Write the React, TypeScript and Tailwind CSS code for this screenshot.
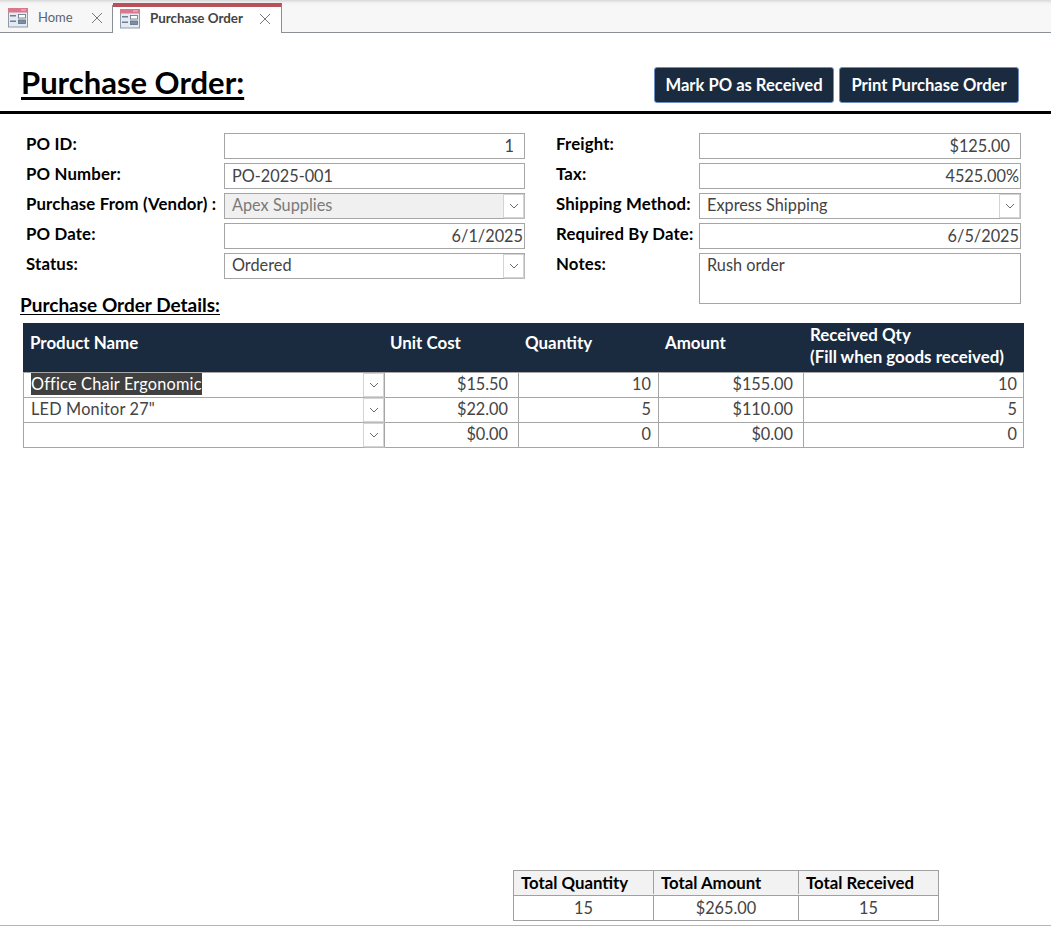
import type { ReactNode } from 'react';

const font = "font-['Lato',sans-serif]";

function FormIcon() {
  return (
    <svg width="20" height="20" viewBox="0 0 20 20" className="shrink-0">
      <rect x="0.5" y="0.5" width="19" height="18.5" fill="#e4eaf1" stroke="#8e9bab" />
      <rect x="0" y="0" width="20" height="4.5" fill="#d9788c" />
      <rect x="13" y="1.5" width="5" height="1" fill="#f2c4cf" />
      <rect x="2" y="7" width="6" height="1.5" fill="#6f7e90" />
      <rect x="2" y="12.5" width="6" height="1.5" fill="#6f7e90" />
      <rect x="10.5" y="6.5" width="7" height="3.5" fill="#fff" stroke="#5f6f82" strokeWidth="0.8" />
      <rect x="10.5" y="12" width="7" height="3.5" fill="#7e8ea1" stroke="#5f6f82" strokeWidth="0.8" />
    </svg>
  );
}

function CloseIcon() {
  return (
    <svg width="12" height="12" viewBox="0 0 12 12" className="shrink-0">
      <path d="M1 1 L11 11 M11 1 L1 11" stroke="#77797c" strokeWidth="1" fill="none" />
    </svg>
  );
}

function DropButton() {
  return (
    <span className="flex h-full w-[21px] shrink-0 items-center justify-center border border-[#d4d4d4] bg-white shadow-[1px_1px_0_#bbb]">
      <svg width="10" height="6" viewBox="0 0 10 6">
        <path d="M1 1 L5 5 L9 1" stroke="#6a6a6a" strokeWidth="1" fill="none" />
      </svg>
    </span>
  );
}

function Field({ label, children }: { label: string; children: ReactNode }) {
  return (
    <div className="flex items-start">
      <label className="w-[var(--lw)] shrink-0 whitespace-nowrap pt-[1px] text-[16.8px] font-bold leading-[20px] tracking-[0.15px] text-black">
        {label}
      </label>
      {children}
    </div>
  );
}

function TextBox({ value, right, pr = 'pr-[10px]' }: { value: string; right?: boolean; pr?: string }) {
  return (
    <div
      className={
        'flex h-[26px] flex-1 items-center border border-[#a6a6a6] bg-white pl-[7px] text-[16.3px] text-[#444] ' +
        (right ? 'justify-end ' : '') +
        pr
      }
    >
      {value}
    </div>
  );
}

function ComboBox({ value, disabled }: { value: string; disabled?: boolean }) {
  return (
    <div
      className={
        'flex h-[26px] flex-1 items-center justify-between border border-[#a6a6a6] pl-[7px] text-[16.3px] ' +
        (disabled ? 'bg-[#f0f0f0] text-[#7a7a7a]' : 'bg-white text-[#444]')
      }
    >
      <span className="mt-[-2px]">{value}</span>
      <DropButton />
    </div>
  );
}

const lines = [
  { name: 'Office Chair Ergonomic', cost: '$15.50', qty: '10', amount: '$155.00', received: '10', selected: true },
  { name: 'LED Monitor 27"', cost: '$22.00', qty: '5', amount: '$110.00', received: '5', selected: false },
  { name: '', cost: '$0.00', qty: '0', amount: '$0.00', received: '0', selected: false },
];

const cols = 'grid grid-cols-[361px_134px_140px_145px_221px]';

export default function App() {
  return (
    <div className={'flex h-[926px] w-[1051px] flex-col overflow-hidden bg-white ' + font}>
      {/* Tabs */}
      <div className="flex h-[33px] shrink-0 items-end border-b border-[#8b9097] bg-[linear-gradient(#d8d8d8_0px,#f3f3f3_3px,#f7f7f7_6px)]">
        <div className="flex h-[27px] w-[113px] items-center border-r border-[#8b9097] pb-[2px] pl-[8px] pr-[9px] text-[13px] text-[#5a6472]">
          <FormIcon />
          <span className="ml-[10px] flex-1">Home</span>
          <CloseIcon />
        </div>
        <div className="mb-[-1px] flex h-[30px] w-[169px] items-center border-r border-t-[4px] border-r-[#8b9097] border-t-[#b8505a] bg-white pb-[3px] pl-[7px] pr-[10px] text-[13.4px] font-bold text-[#444]">
          <FormIcon />
          <span className="ml-[10px] flex-1 whitespace-nowrap">Purchase Order</span>
          <CloseIcon />
        </div>
      </div>

      {/* Header */}
      <div className="flex h-[81px] shrink-0 items-start justify-between border-b-[3px] border-black pl-[21px] pr-[32px] pt-[34px]">
        <h1 className="mt-[-3px] text-[31px] font-bold leading-[36px] text-black underline decoration-[3px] underline-offset-[3px]">
          Purchase Order:
        </h1>
        <div className="flex gap-[5px]">
          <button className="h-[36px] w-[180px] whitespace-nowrap rounded-[3px] border border-[#6d8fc0] bg-[#1a2b3f] text-[16.6px] font-bold text-white">
            Mark PO as Received
          </button>
          <button className="h-[36px] w-[180px] whitespace-nowrap rounded-[3px] border border-[#6d8fc0] bg-[#1a2b3f] text-[16.6px] font-bold text-white">
            Print Purchase Order
          </button>
        </div>
      </div>

      {/* Form */}
      <div className="flex pt-[19px]">
        <div className="flex w-[525px] flex-col gap-[4px] pl-[26px] [--lw:198px]">
          <Field label="PO ID:">
            <TextBox value="1" right />
          </Field>
          <Field label="PO Number:">
            <TextBox value="PO-2025-001" />
          </Field>
          <Field label="Purchase From (Vendor) :">
            <ComboBox value="Apex Supplies" disabled />
          </Field>
          <Field label="PO Date:">
            <TextBox value="6/1/2025" right pr="pr-[1px]" />
          </Field>
          <Field label="Status:">
            <ComboBox value="Ordered" />
          </Field>
        </div>
        <div className="ml-[31px] flex w-[465px] flex-col gap-[4px] [--lw:143px]">
          <Field label="Freight:">
            <TextBox value="$125.00" right />
          </Field>
          <Field label="Tax:">
            <TextBox value="4525.00%" right pr="pr-[1px]" />
          </Field>
          <Field label="Shipping Method:">
            <ComboBox value="Express Shipping" />
          </Field>
          <Field label="Required By Date:">
            <TextBox value="6/5/2025" right pr="pr-[1px]" />
          </Field>
          <Field label="Notes:">
            <div className="h-[51px] flex-1 border border-[#a6a6a6] bg-white pl-[7px] text-[16.3px] leading-[22px] text-[#444]">
              Rush order
            </div>
          </Field>
        </div>
      </div>

      {/* Details */}
      <h2 className="ml-[20px] mt-[-10px] whitespace-nowrap text-[19px] font-bold leading-[22px] text-black underline underline-offset-[2px]">
        Purchase Order Details:
      </h2>
      <div className="ml-[23px] mt-[7px] w-[1001px]">
        <div className={cols + ' h-[49px] items-start bg-[#1a2b3f] text-[16.9px] font-bold leading-[22px] text-white'}>
          <div className="pl-[7px] pt-[9px]">Product Name</div>
          <div className="pl-[6px] pt-[9px]">Unit Cost</div>
          <div className="pl-[7px] pt-[9px]">Quantity</div>
          <div className="pl-[7px] pt-[9px]">Amount</div>
          <div className="whitespace-nowrap pl-[7px] pt-[1px]">
            Received Qty
            <br />
            (Fill when goods received)
          </div>
        </div>
        <div className="border-x border-b border-[#a6a6a6]">
          {lines.map((l, i) => (
            <div
              key={i}
              className={cols + ' -mx-px h-[25px] border-t border-[#a6a6a6] text-[16.3px] leading-[21px] text-[#444]'}
            >
              <div className="flex justify-between pl-[8px]">
                <span className={'self-start leading-[22px] tracking-[0.2px] ' + (l.selected ? 'bg-[#404040] text-white' : '')}>
                  {l.name}
                </span>
                <DropButton />
              </div>
              <div className="border-l border-[#a6a6a6] pr-[10px] text-right">{l.cost}</div>
              <div className="border-l border-[#a6a6a6] pr-[7px] text-right">{l.qty}</div>
              <div className="border-l border-[#a6a6a6] pr-[10px] text-right">{l.amount}</div>
              <div className="border-l border-[#a6a6a6] pr-[7px] text-right">{l.received}</div>
            </div>
          ))}
        </div>
      </div>

      {/* Totals */}
      <div className="ml-[513px] mt-auto w-[426px] border border-[#a0a0a0]">
        <div className="grid grid-cols-[139px_145px_140px] border-b border-[#a0a0a0] bg-[#f2f2f2] pb-[1px] text-[16.8px] font-bold leading-[23px] text-black">
          <div className="whitespace-nowrap pl-[7px]">Total Quantity</div>
          <div className="whitespace-nowrap border-l border-[#a0a0a0] pl-[7px]">Total Amount</div>
          <div className="whitespace-nowrap border-l border-[#a0a0a0] pl-[7px]">Total Received</div>
        </div>
        <div className="grid grid-cols-[139px_145px_140px] text-center text-[16.3px] leading-[24px] text-[#444]">
          <div>15</div>
          <div className="border-l border-[#a0a0a0]">$265.00</div>
          <div className="border-l border-[#a0a0a0]">15</div>
        </div>
      </div>
      <div className="mt-[4px] h-[1px] shrink-0 bg-[#b5b5b5]" />
    </div>
  );
}
